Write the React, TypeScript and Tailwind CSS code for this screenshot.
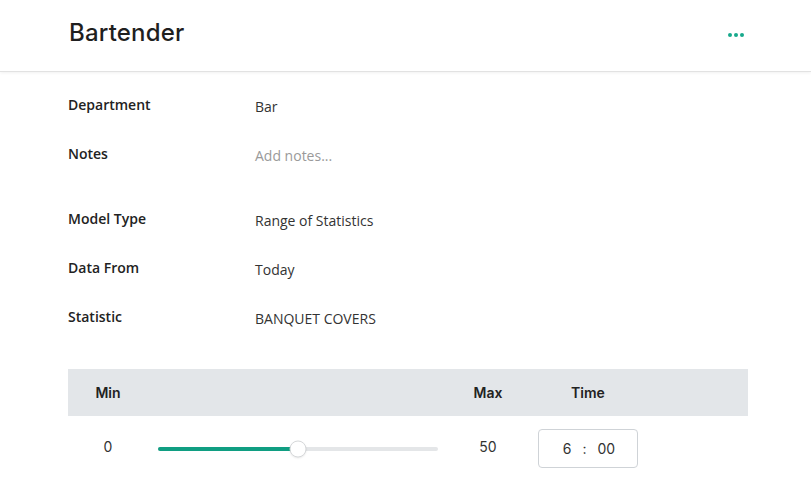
import React from 'react'

const rows1 = [
  { label: 'Department', value: 'Bar' },
  { label: 'Notes', value: 'Add notes...', placeholder: true },
]

const rows2 = [
  { label: 'Model Type', value: 'Range of Statistics' },
  { label: 'Data From', value: 'Today' },
  { label: 'Statistic', value: 'BANQUET COVERS' },
]

function Row({ label, value, placeholder }: { label: string; value: string; placeholder?: boolean }) {
  return (
    <div className="flex h-[49px] items-center">
      <div className="w-[187px] text-[14px] font-semibold text-[#222]">{label}</div>
      <div className={`mt-[3px] text-[14px] ${placeholder ? 'text-[#9a9a9a]' : 'text-[#333]'}`}>{value}</div>
    </div>
  )
}

export default function App() {
  const pct = 50
  return (
    <div className="min-h-[480px] w-full bg-white" style={{ fontFamily: '"Open Sans", sans-serif' }}>
      <header className="flex h-[72px] items-center justify-between border-b border-[#e2e2e2] pl-[69px] pr-[67px] shadow-[0_1px_3px_rgba(0,0,0,0.06)]">
        <h1 className="mb-[6px] text-[24px] font-medium tracking-[0.2px] text-[#1f1f1f]" style={{ fontFamily: 'Inter, sans-serif' }}>
          Bartender
        </h1>
        <button className="mb-[2px] flex items-center gap-[2px]">
          <span className="h-[4px] w-[4px] rounded-full bg-[#17a98c]" />
          <span className="h-[4px] w-[4px] rounded-full bg-[#17a98c]" />
          <span className="h-[4px] w-[4px] rounded-full bg-[#17a98c]" />
        </button>
      </header>

      <div className="px-[68px] pt-[8px]">
        {rows1.map((r) => (
          <Row key={r.label} {...r} />
        ))}
        <div className="h-[16px]" />
        {rows2.map((r) => (
          <Row key={r.label} {...r} />
        ))}

        <div className="mt-[28px] w-[680px]" style={{ fontFamily: 'Inter, sans-serif' }}>
          <div className="flex h-[47px] items-center bg-[#e3e6e9] text-[14px] font-semibold text-[#222]">
            <div className="w-[80px] text-center">Min</div>
            <div className="w-[290px]" />
            <div className="w-[100px] text-center">Max</div>
            <div className="w-[100px] text-center">Time</div>
          </div>
          <div className="flex items-center pt-[13px] text-[14px] text-[#333]">
            <div className="mb-[4px] w-[80px] text-center">0</div>
            <div className="w-[290px] pl-[10px]">
              <div className="relative h-[4px] w-[280px] rounded-full bg-[#e4e6e8]">
                <div className="h-full rounded-full bg-[#109e82]" style={{ width: `${pct}%` }} />
                <div
                  className="absolute top-1/2 h-[17px] w-[17px] -translate-x-1/2 -translate-y-1/2 rounded-full border border-[#d6d8da] bg-white shadow-[0_1px_2px_rgba(0,0,0,0.08)]"
                  style={{ left: `${pct}%` }}
                />
              </div>
            </div>
            <div className="mb-[4px] w-[100px] text-center">50</div>
            <div className="w-[100px]">
              <div className="flex h-[39px] w-[100px] items-center justify-center gap-[11px] rounded-[4px] border border-[#cfd3d7] pl-[2px] text-[14px] text-[#333]">
                <span>6</span>
                <span>:</span>
                <span>00</span>
              </div>
            </div>
          </div>
        </div>
      </div>
    </div>
  )
}
